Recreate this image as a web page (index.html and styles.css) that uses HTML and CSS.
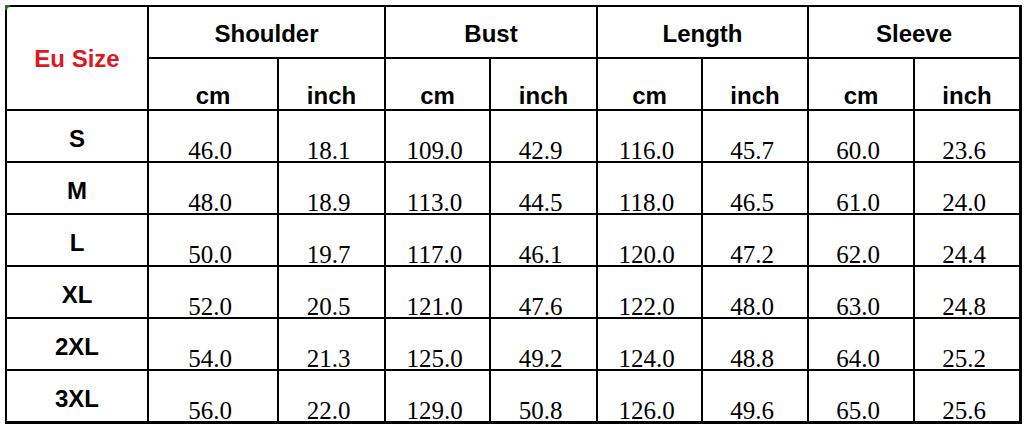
FILE: index.html
```html
<!DOCTYPE html>
<html>
<head>
<meta charset="utf-8">
<link rel="stylesheet" href="styles.css">
</head>
<body>
<div class="sheet">
  <div class="corner"></div>
  <div class="chart">
    <div class="cell h-size">Eu Size</div>
    <div class="cell h-group">Shoulder</div>
    <div class="cell h-group">Bust</div>
    <div class="cell h-group">Length</div>
    <div class="cell h-group">Sleeve</div>
    <div class="cell h-unit">cm</div><div class="cell h-unit">inch</div>
    <div class="cell h-unit">cm</div><div class="cell h-unit">inch</div>
    <div class="cell h-unit">cm</div><div class="cell h-unit">inch</div>
    <div class="cell h-unit">cm</div><div class="cell h-unit">inch</div>

    <div class="cell size">S</div>
    <div class="cell val">46.0</div><div class="cell val">18.1</div><div class="cell val">109.0</div><div class="cell val">42.9</div><div class="cell val">116.0</div><div class="cell val">45.7</div><div class="cell val">60.0</div><div class="cell val">23.6</div>

    <div class="cell size">M</div>
    <div class="cell val">48.0</div><div class="cell val">18.9</div><div class="cell val">113.0</div><div class="cell val">44.5</div><div class="cell val">118.0</div><div class="cell val">46.5</div><div class="cell val">61.0</div><div class="cell val">24.0</div>

    <div class="cell size">L</div>
    <div class="cell val">50.0</div><div class="cell val">19.7</div><div class="cell val">117.0</div><div class="cell val">46.1</div><div class="cell val">120.0</div><div class="cell val">47.2</div><div class="cell val">62.0</div><div class="cell val">24.4</div>

    <div class="cell size">XL</div>
    <div class="cell val">52.0</div><div class="cell val">20.5</div><div class="cell val">121.0</div><div class="cell val">47.6</div><div class="cell val">122.0</div><div class="cell val">48.0</div><div class="cell val">63.0</div><div class="cell val">24.8</div>

    <div class="cell size">2XL</div>
    <div class="cell val">54.0</div><div class="cell val">21.3</div><div class="cell val">125.0</div><div class="cell val">49.2</div><div class="cell val">124.0</div><div class="cell val">48.8</div><div class="cell val">64.0</div><div class="cell val">25.2</div>

    <div class="cell size">3XL</div>
    <div class="cell val">56.0</div><div class="cell val">22.0</div><div class="cell val">129.0</div><div class="cell val">50.8</div><div class="cell val">126.0</div><div class="cell val">49.6</div><div class="cell val">65.0</div><div class="cell val">25.6</div>
  </div>
</div>
</body>
</html>
```

FILE: styles.css
```css
html, body {
  margin: 0;
  padding: 0;
  background: #ffffff;
}

.sheet {
  position: relative;
  padding: 5px 0 0 5px;
}

.corner {
  position: absolute;
  left: 5px;
  top: 5px;
  width: 0;
  height: 0;
  border-top: 6px solid #2f6b2a;
  border-right: 6px solid transparent;
}

.chart {
  display: inline-grid;
  grid-template-columns: 140px 128px 105px 103px 105px 103px 104px 104px 104px;
  grid-auto-rows: 50px;
  gap: 2px;
  padding: 2px 3px 3px 2px;
  background: #000000;
}

.cell {
  background: #ffffff;
  display: flex;
  justify-content: center;
  box-sizing: border-box;
  color: #000000;
  font-family: "Liberation Sans", Arial, sans-serif;
  font-weight: bold;
  font-size: 24px;
}

.h-size {
  grid-row: span 2;
  align-items: center;
  padding-top: 2px;
  color: #e3161e;
}

.h-group {
  grid-column: span 2;
  align-items: center;
  padding-top: 3px;
}

.h-unit {
  align-items: flex-end;
  line-height: 26px;
}

.size {
  align-items: center;
  padding-top: 5px;
}

.val {
  align-items: flex-end;
  padding-right: 6px;
  font-family: "Liberation Serif", "Times New Roman", serif;
  font-weight: normal;
  font-size: 25px;
  line-height: 21px;
}
```
